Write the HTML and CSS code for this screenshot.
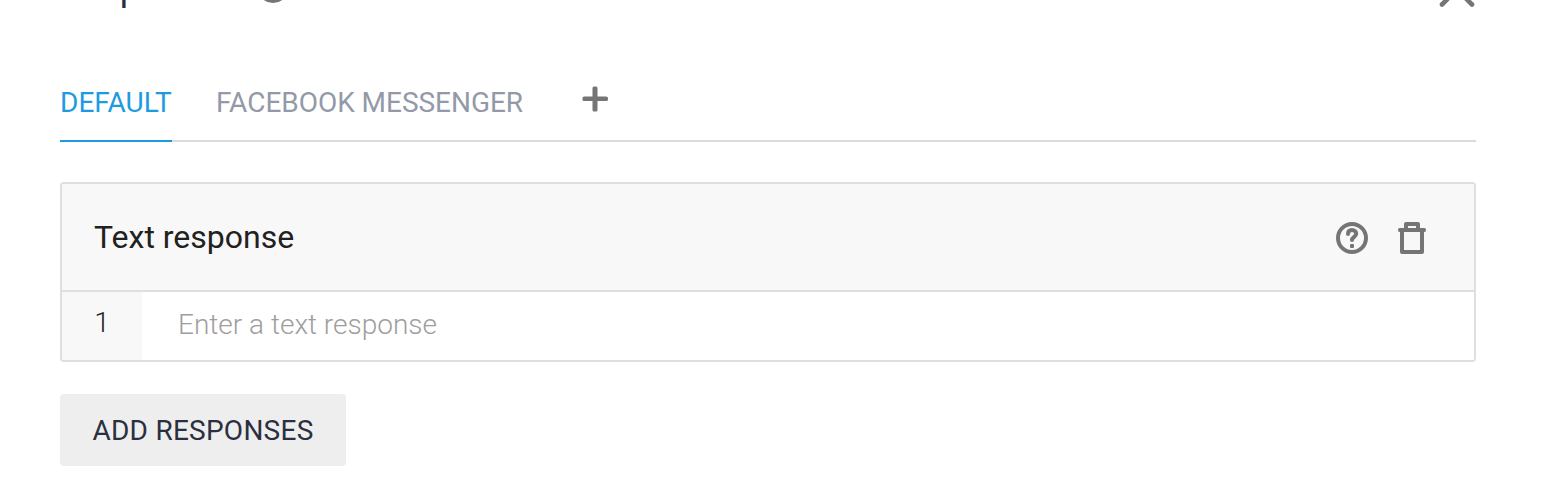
FILE: index.html
```html
<!DOCTYPE html>
<html lang="en">
<head>
<meta charset="utf-8">
<title>Responses</title>
<link rel="stylesheet" href="styles.css">
</head>
<body>
<main class="panel">
  <header class="panel-header">
    <h1 class="panel-title">Responses</h1>
    <svg class="title-help" viewBox="0 0 32 32"><circle cx="16" cy="16" r="14" fill="none" stroke="#757575" stroke-width="4"/></svg>
    <svg class="collapse" viewBox="0 0 36 20"><path d="M3 17.5 18 2.5 33 17.5" fill="none" stroke="#757575" stroke-width="4.6" stroke-linecap="round"/></svg>
  </header>
  <nav class="tabs">
    <a class="tab tab-active">DEFAULT</a>
    <a class="tab tab-second">FACEBOOK MESSENGER</a>
    <svg class="plus" viewBox="0 0 26 26"><path fill="#757575" d="M2 10.5H10.5V2Q10.5.5 12 .5H14Q15.5.5 15.5 2V10.5H24Q26 10.5 26 12V13.5Q26 15 24 15H15.5V24Q15.5 25.5 14 25.5H12Q10.5 25.5 10.5 24V15H2Q.5 15 .5 13.5V12Q.5 10.5 2 10.5Z"/></svg>
  </nav>
  <section class="card">
    <div class="card-header">
      <h2 class="card-title">Text response</h2>
      <svg class="icon-help" viewBox="0 0 32 32"><circle cx="16" cy="16" r="14" fill="none" stroke="#757575" stroke-width="4"/><path d="M12 12C12 9.4 13.6 8 16 8S20.2 9.6 20.2 11.8C20.2 14.8 16 14.8 16 18" fill="none" stroke="#757575" stroke-width="4" stroke-linecap="round"/><rect x="14" y="22" width="4" height="4" rx="1" fill="#757575"/></svg>
      <svg class="icon-trash" viewBox="0 0 28 32"><path fill="#757575" fill-rule="evenodd" d="M6 6V2Q6 0 8 0H20Q22 0 22 2V6H26.5Q28 6 28 8T26.5 10H26V30Q26 32 24 32H4Q2 32 2 30V10H1.5Q0 10 0 8T1.5 6ZM10 4V6H18V4ZM6 10V28H22V10Z"/></svg>
    </div>
    <div class="response-row">
      <span class="row-number">1</span>
      <input class="response-input" type="text" placeholder="Enter a text response">
    </div>
  </section>
  <button class="add-button">ADD RESPONSES</button>
</main>
</body>
</html>
```
FILE: styles.css
```css
* { box-sizing: border-box; }
html, body { margin: 0; height: 500px; overflow: hidden; background: #fff; }
body { font-family: Roboto, "Liberation Sans", sans-serif; }
svg { display: block; flex: none; }
.panel { width: 1416px; margin-left: 60px; height: 500px; }
.panel-header { display: flex; align-items: flex-start; height: 64px; }
.panel-title { width: 180px; margin: -33px 0 0; font-size: 36px; line-height: 42px; font-weight: 400; color: #2b3040; }
.title-help { width: 32px; height: 32px; margin: -29px 0 0 17px; }
.collapse { width: 36px; height: 20px; margin: -13px 1.5px 0 auto; }
.tabs { display: flex; height: 78px; border-bottom: 2px solid #dbdbdb; }
.tab { height: 78px; line-height: 77px; font-size: 28px; color: #9399a7; white-space: nowrap; }
.tab-active { width: 112px; color: #1e9be0; border-bottom: 2px solid #1e9be0; }
.tab-second { width: 308px; margin-left: 44px; letter-spacing: -0.03px; }
.plus { width: 26px; height: 26px; margin: 22px 0 0 58px; }
.card { margin-top: 40px; height: 180px; border: 2px solid #dfdfdf; border-radius: 4px; overflow: hidden; }
.card-header { display: flex; align-items: center; height: 108px; padding: 0 48px 0 32px; background: #f8f8f8; border-bottom: 2px solid #dfdfdf; }
.card-title { flex: 1; margin: 0; font-size: 32px; font-weight: 400; line-height: 38px; color: #212121; }
.icon-help { width: 32px; height: 32px; margin: 2px 30px 0 0; }
.icon-trash { width: 28px; height: 32px; margin-top: 2px; }
.response-row { display: flex; height: 68px; font-size: 28px; font-weight: 300; }
.row-number { width: 80px; line-height: 62px; text-align: center; background: #f8f8f8; color: #212121; }
.response-input { flex: 1; border: 0; outline: 0; padding: 0 36px 3px; font: inherit; background: #fff; }
.response-input::placeholder { color: #9e9e9e; opacity: 1; }
.add-button { display: block; width: 286px; height: 72px; margin-top: 32px; padding: 2px 0 0; border: 0; border-radius: 4px; background: #eee; color: #2b3040; font: 400 28px/70px Roboto, "Liberation Sans", sans-serif; letter-spacing: 0.25px; }
```
